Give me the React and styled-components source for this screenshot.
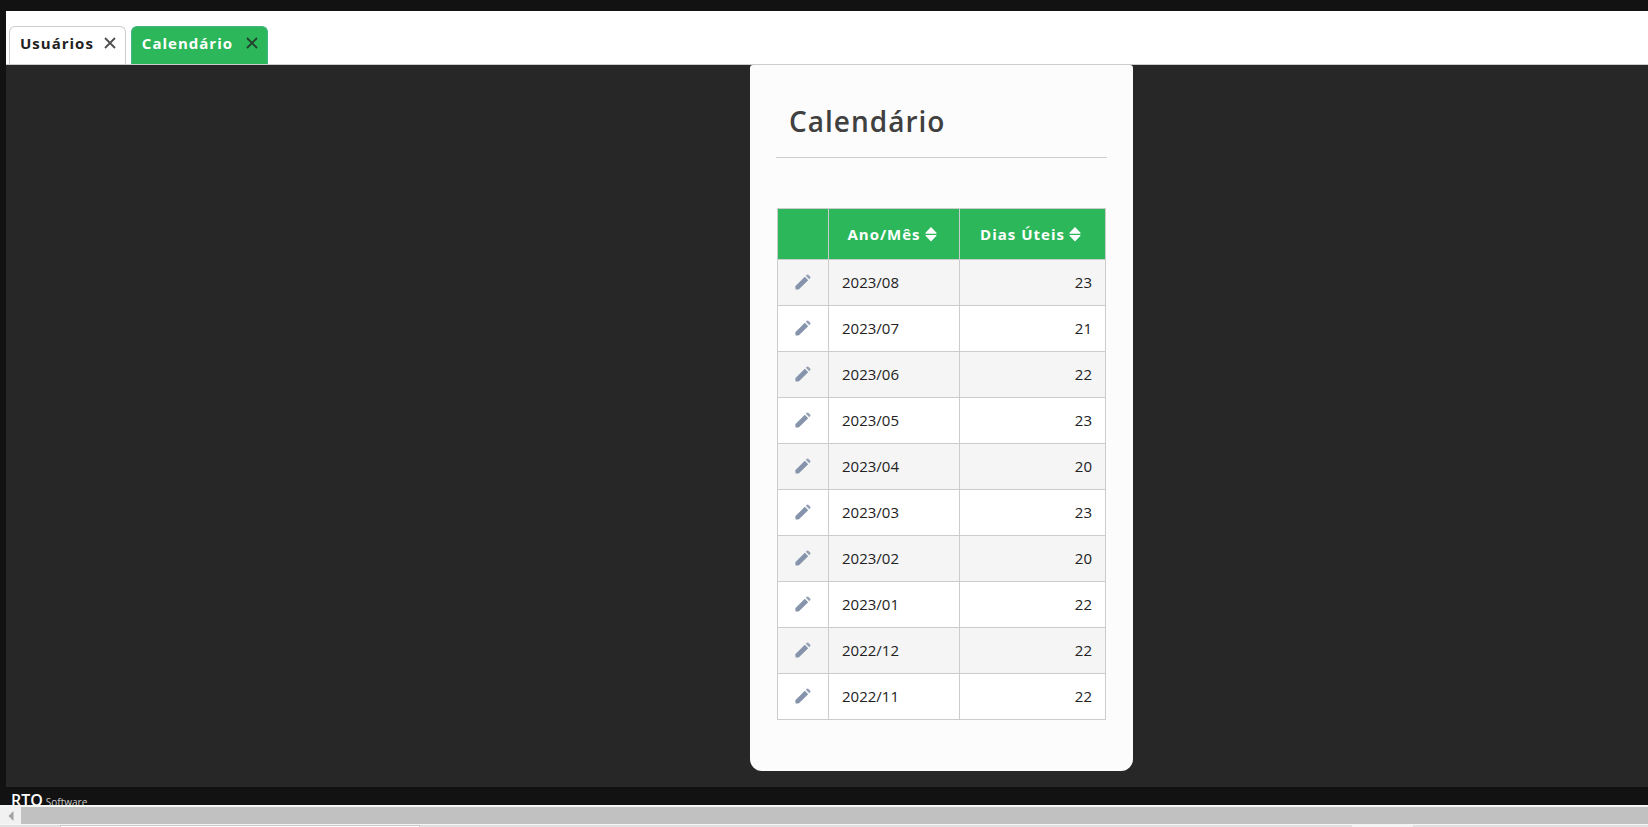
import React from "react";
import styled, { createGlobalStyle } from "styled-components";

const GlobalStyle = createGlobalStyle`
  *, *::before, *::after { box-sizing: border-box; }
  body {
    margin: 0;
    overflow: hidden;
    background: #121212;
    color: #222;
    font-family: "Open Sans", "Noto Sans", sans-serif;
  }
`;

const Page = styled.div`
  display: flex;
  flex-direction: column;
  min-height: 100vh;
`;

const Workspace = styled.div`
  display: flex;
  flex: 1;
  flex-direction: column;
  padding: 11px 0 0 6px;
`;

const TabBar = styled.nav`
  display: flex;
  align-items: flex-end;
  gap: 5px;
  padding: 15px 3px 0;
  background: #fff;
  border-bottom: 1px solid #ccc;
`;

const Tab = styled.div`
  display: flex;
  align-items: center;
  justify-content: space-between;
  gap: 10px;
  min-width: ${(p) => (p.$active ? "137px" : "0")};
  height: 38px;
  padding: 0 9px 5px 10px;
  border: 1px solid ${(p) => (p.$active ? "#45b287" : "#ccc")};
  border-bottom: 0;
  border-radius: 6px 6px 0 0;
  background: ${(p) => (p.$active ? "#2bb75a" : "#fff")};
`;

const TabLink = styled.a`
  color: ${(p) => (p.$active ? "#fff" : "#222")};
  font-size: 15px;
  font-weight: 700;
  line-height: 20px;
  letter-spacing: 1px;
  text-decoration: none;
`;

const IconButton = styled.button`
  display: flex;
  align-items: center;
  justify-content: center;
  padding: 0;
  border: 0;
  background: none;
  color: inherit;
  cursor: pointer;
`;

const Main = styled.main`
  display: grid;
  flex: 1;
  grid-template-columns: 744fr auto 515fr;
  align-items: start;
  padding-bottom: 16px;
  background: #272727;
`;

const Card = styled.section`
  grid-column: 2;
  padding: 25px 26px 51px;
  border-radius: 3px 3px 12px 12px;
  background: #fcfcfc;
`;

const Title = styled.h1`
  margin: 0 0 50px;
  padding: 14px 13px 18px;
  border-bottom: 1px solid #ccc;
  color: #404040;
  font-size: 28px;
  font-weight: 600;
  line-height: 35px;
  letter-spacing: 1px;
`;

const Table = styled.table`
  width: 329px;
  margin: 0 1px;
  border-collapse: collapse;
  table-layout: fixed;
`;

const Col = styled.col`
  width: ${(p) => p.$width}px;
`;

const HeadCell = styled.th`
  height: 51px;
  padding: 0;
  border: 1px solid #ccc;
  background: #2bb75a;
`;

const SortButton = styled(IconButton)`
  gap: 4px;
  width: 100%;
  padding-right: 4px;
  color: #fff;
  font: 700 15px/20px "Open Sans", "Noto Sans", sans-serif;
  letter-spacing: 1px;
`;

const Row = styled.tr`
  background: #fff;
  &:nth-child(odd) { background: #f5f5f5; }
`;

const Cell = styled.td`
  height: 46px;
  padding: 0 13px 2px;
  border: 1px solid #ccc;
  color: #222;
  font-size: 15px;
  line-height: 20px;
  text-align: ${(p) => p.$align || "left"};
`;

const EditCell = styled(Cell)`
  padding: 0 17px 2px;
`;

const Footer = styled.footer`
  display: flex;
  align-items: baseline;
  gap: 3px;
  height: 18px;
  padding-left: 11px;
  overflow: hidden;
  color: #ccc;
  font-size: 10px;
  line-height: 26px;
`;

const Brand = styled.strong`
  color: #fff;
  font-size: 16px;
  font-weight: 600;
`;

const ScrollBar = styled.div`
  display: flex;
  height: 20px;
  padding: 2px 0 1px;
  background: #f5f5f5;
`;

const ScrollArrow = styled(IconButton)`
  width: 21px;
  background: #f1f1f1;
`;

const ScrollThumb = styled.div`
  flex: 1;
  background: #c1c1c1;
`;

const BottomEdge = styled.div`
  display: grid;
  grid-template-columns: 60fr 360fr 932fr 61fr 235fr;
  height: 2px;
  background: #e0e0e0;
`;

const EdgePanel = styled.div`
  grid-column: ${(p) => p.$column};
  border: solid #c8c8c8;
  border-width: ${(p) => (p.$framed ? "1px 1px 0" : "0")};
  background: ${(p) => (p.$framed ? "#fff" : "#f3f3f3")};
`;

const CloseIcon = () => (
  <svg width="12" height="12" viewBox="0 0 12 12" aria-hidden="true">
    <path d="M1 1L11 11M11 1L1 11" stroke="#222" strokeOpacity=".8" strokeWidth="1.8" fill="none" />
  </svg>
);

const SortIcon = () => (
  <svg width="12" height="15" viewBox="0 0 12 15" aria-hidden="true">
    <path d="M6 0L11.5 5.8Q12 6.7 11 6.7H1Q0 6.7 .5 5.8ZM6 14.6L.5 8.8Q0 7.9 1 7.9H11Q12 7.9 11.5 8.8Z" fill="#fff" />
  </svg>
);

const PencilIcon = () => (
  <svg width="16" height="16" viewBox="0 0 16 16" aria-hidden="true">
    <path
      d="M.6 15.5L.3 12.8Q.3 12.2.8 11.7L9.8 2.8L13.2 6.2L4.2 15Q3.8 15.4 3.2 15.4Z"
      fill="#8594ab"
    />
    <path d="M10.8 1.8L11.9.7Q12.6.1 13.3.7L15.3 2.7Q15.9 3.4 15.3 4.1L14.2 5.2Z" fill="#94a1b5" />
  </svg>
);

const ArrowIcon = () => (
  <svg width="6" height="10" viewBox="0 0 6 10" aria-hidden="true">
    <path d="M5.5 0V10L.5 5Z" fill="#a3a3a3" />
  </svg>
);

const tabs = [
  { label: "Usuários", active: false },
  { label: "Calendário", active: true },
];

const months = [
  ["2023/08", 23],
  ["2023/07", 21],
  ["2023/06", 22],
  ["2023/05", 23],
  ["2023/04", 20],
  ["2023/03", 23],
  ["2023/02", 20],
  ["2023/01", 22],
  ["2022/12", 22],
  ["2022/11", 22],
];

export default function App() {
  return (
    <Page>
      <GlobalStyle />
      <Workspace>
        <TabBar>
          {tabs.map((tab) => (
            <Tab key={tab.label} $active={tab.active}>
              <TabLink href="#" $active={tab.active}>{tab.label}</TabLink>
              <IconButton type="button" aria-label={`Fechar ${tab.label}`}>
                <CloseIcon />
              </IconButton>
            </Tab>
          ))}
        </TabBar>
        <Main>
          <Card>
            <Title>Calendário</Title>
            <Table>
              <colgroup>
                <Col $width={51} />
                <Col $width={131} />
                <Col $width={146} />
              </colgroup>
              <thead>
                <tr>
                  <HeadCell />
                  <HeadCell scope="col">
                    <SortButton type="button">Ano/Mês<SortIcon /></SortButton>
                  </HeadCell>
                  <HeadCell scope="col">
                    <SortButton type="button">Dias Úteis<SortIcon /></SortButton>
                  </HeadCell>
                </tr>
              </thead>
              <tbody>
                {months.map(([month, days]) => (
                  <Row key={month}>
                    <EditCell>
                      <IconButton type="button" aria-label={`Editar ${month}`}>
                        <PencilIcon />
                      </IconButton>
                    </EditCell>
                    <Cell>{month}</Cell>
                    <Cell $align="right">{days}</Cell>
                  </Row>
                ))}
              </tbody>
            </Table>
          </Card>
        </Main>
      </Workspace>
      <Footer>
        <Brand>RTO</Brand>
        <span>Software</span>
      </Footer>
      <ScrollBar>
        <ScrollArrow type="button" aria-label="Rolar para a esquerda">
          <ArrowIcon />
        </ScrollArrow>
        <ScrollThumb />
      </ScrollBar>
      <BottomEdge>
        <EdgePanel $column={2} $framed />
        <EdgePanel $column={4} />
      </BottomEdge>
    </Page>
  );
}
